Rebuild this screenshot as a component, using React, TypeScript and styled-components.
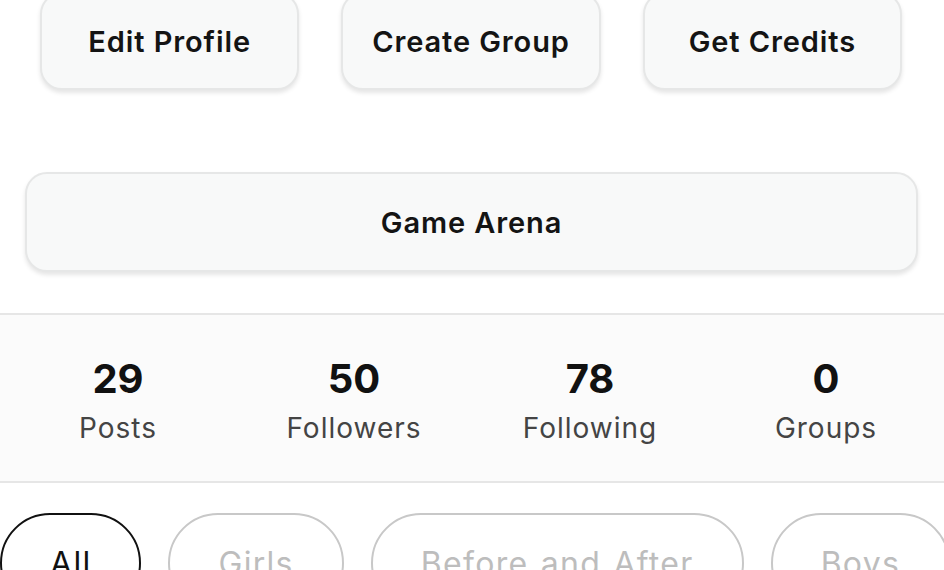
import React from "react";
import styled, { createGlobalStyle } from "styled-components";

const GlobalStyle = createGlobalStyle`
	html, body {
		margin: 0;
		padding: 0;
		background: #ffffff;
		overflow: hidden;
	}
	body {
		font-family: Inter, "Noto Sans", "Liberation Sans", sans-serif;
		color: #111111;
	}
`;

const Page = styled.div`
	width: 944px;
	height: 570px;
	overflow: hidden;
	display: flex;
	flex-direction: column;
	& > * {
		flex-shrink: 0;
	}
`;

const ActionRow = styled.div`
	display: grid;
	grid-template-columns: repeat(3, 1fr);
	gap: 42px;
	padding: 0 42px 0 40px;
	margin-top: -8px;
`;

const ActionButton = styled.button<{ $wide?: boolean }>`
	height: ${(p) => (p.$wide ? "100px" : "98px")};
	border: 2px solid #e6e7e7;
	border-radius: 22px;
	background: #f8f9f9;
	box-shadow: 0 3px 4px rgba(0, 0, 0, 0.1);
	font-family: Inter, "Noto Sans", "Liberation Sans", sans-serif;
	font-size: 29px;
	font-weight: 600;
	letter-spacing: 0.9px;
	color: #141414;
	display: flex;
	align-items: center;
	justify-content: center;
	padding: 0;
`;

const ArenaWrap = styled.div`
	margin-top: 82px;
	padding: 0 26px 0 25px;
	display: flex;
	flex-direction: column;
`;

const Stats = styled.div`
	margin-top: 41px;
	height: 170px;
	box-sizing: border-box;
	border-top: 2px solid #e6e6e6;
	border-bottom: 2px solid #e6e6e6;
	background: #fbfbfb;
	display: grid;
	grid-template-columns: repeat(4, 1fr);
	align-items: center;
	padding-top: 5px;
`;

const Stat = styled.div`
	display: flex;
	flex-direction: column;
	align-items: center;
	gap: 10px;
`;

const StatValue = styled.span`
	font-size: 40px;
	font-weight: 700;
	line-height: 44px;
	color: #111111;
`;

const StatLabel = styled.span`
	font-size: 28px;
	font-weight: 400;
	line-height: 34px;
	color: #444444;
	letter-spacing: 1px;
`;

const Chips = styled.div`
	margin-top: 30px;
	display: flex;
	gap: 27px;
	white-space: nowrap;
`;

const Chip = styled.div<{ $active?: boolean }>`
	flex: none;
	height: 100px;
	box-sizing: border-box;
	padding: 0 48px;
	border-radius: 50px;
	border: 2.5px solid ${(p) => (p.$active ? "#111111" : "#c8c8c8")};
	color: ${(p) => (p.$active ? "#111111" : "#bdbdbd")};
	font-size: 32px;
	font-weight: 400;
	letter-spacing: 1.3px;
	word-spacing: 2px;
	display: flex;
	align-items: center;
	justify-content: center;
`;

const stats = [
	{ value: 29, label: "Posts" },
	{ value: 50, label: "Followers" },
	{ value: 78, label: "Following" },
	{ value: 0, label: "Groups" },
];

const filters = ["All", "Girls", "Before and After", "Boys"];

export default function App() {
	return (
		<Page>
			<GlobalStyle />
			<ActionRow>
				<ActionButton>Edit Profile</ActionButton>
				<ActionButton>Create Group</ActionButton>
				<ActionButton>Get Credits</ActionButton>
			</ActionRow>
			<ArenaWrap>
				<ActionButton $wide>Game Arena</ActionButton>
			</ArenaWrap>
			<Stats>
				{stats.map((s) => (
					<Stat key={s.label}>
						<StatValue>{s.value}</StatValue>
						<StatLabel>{s.label}</StatLabel>
					</Stat>
				))}
			</Stats>
			<Chips>
				{filters.map((f, i) => (
					<Chip key={f} $active={i === 0}>
						{f}
					</Chip>
				))}
			</Chips>
		</Page>
	);
}
